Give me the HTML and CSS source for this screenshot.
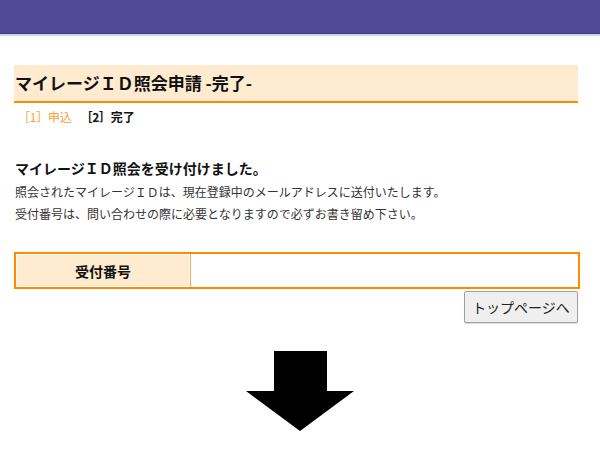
FILE: index.html
```html
<!DOCTYPE html>
<html lang="ja">
<head>
    <meta charset="utf-8">
    <title>マイレージＩＤ照会申請 -完了-</title>
    <link rel="stylesheet" href="styles.css">
</head>
<body>
<div class="topbar"></div>
<div class="warper">
    <h1 class="pagetitle">マイレージＩＤ照会申請 -完了-</h1>
    <div class="steps">
        <span class="step done">［1］申込</span>
        <span class="step now">［2］完了</span>
    </div>

    <h2 class="lead">マイレージＩＤ照会を受け付けました。</h2>
    <p class="note">照会されたマイレージＩＤは、現在登録中のメールアドレスに送付いたします。<br>受付番号は、問い合わせの際に必要となりますので必ずお書き留め下さい。</p>

    <table class="infotable">
        <tr>
            <th>受付番号</th>
            <td></td>
        </tr>
    </table>
    <div class="btnrow">
        <button class="button" type="button">トップページへ</button>
    </div>

    <div class="arrow">
        <svg width="108" height="80" viewBox="0 0 108 80">
            <polygon points="28,0 81,0 81,40 108,40 54,80 0,40 28,40" fill="#000"/>
        </svg>
    </div>
</div>
</body>
</html>
```

FILE: styles.css
```css
html
{
    background: #fff;
    color: #222;
}
body
{
    margin: 0;
    font-family: "Noto Sans CJK JP", "Noto Sans", sans-serif;
    font-size: 12px;
}
.topbar
{
    height: 33px;
    background: #4e4a96;
    border-bottom: 1px solid #3f3a86;
    box-shadow: 0 2px 1px #d4d4d4;
}
.warper
{
    width: 564px;
    margin: 0 0 0 14px;
}
.pagetitle
{
    margin: 31px 0 0 0;
    height: 36px;
    line-height: 36px;
    padding-left: 1px;
    background: #feebd0;
    border-bottom: 2px solid #ff8c00;
    font-size: 17px;
    font-weight: bold;
    color: #111;
}
.steps
{
    margin: 5px 0 0 4px;
    height: 18px;
    line-height: 18px;
    font-size: 12px;
}
.step
{
    margin-right: 6px;
    letter-spacing: -0.2px;
}
.done
{
    color: #ffa040;
}
.now
{
    color: #111;
    font-weight: bold;
}
.lead
{
    margin: 32px 0 0 1px;
    font-size: 14px;
    line-height: 20px;
    font-weight: bold;
    color: #111;
}
.note
{
    margin: 3px 0 0 1px;
    font-size: 12px;
    line-height: 22px;
    color: #333;
}
.infotable
{
    margin-top: 27px;
    width: 566px;
    border: 2px solid #ff8c00;
    border-collapse: collapse;
}
.infotable th
{
    width: 174px;
    height: 33px;
    padding: 0;
    background: #feebd0;
    border-right: 1px solid #ffa64d;
    box-shadow: inset 0 0 0 1px #fff;
    font-size: 14px;
    font-weight: bold;
    color: #111;
}
.infotable td
{
    padding: 0;
    background: #fff;
}
.btnrow
{
    text-align: right;
    margin-top: 2px;
}
.button
{
    width: 114px;
    height: 32px;
    padding: 0;
    font-family: "Noto Sans CJK JP", sans-serif;
    font-size: 14px;
    color: #222;
    background: #efefef;
    border: 1px solid #a0a0a0;
    border-radius: 2px;
    box-shadow: 0 1px 1px rgba(0,0,0,0.15);
}
.arrow
{
    margin: 28px 0 0 232px;
    line-height: 0;
}
```
